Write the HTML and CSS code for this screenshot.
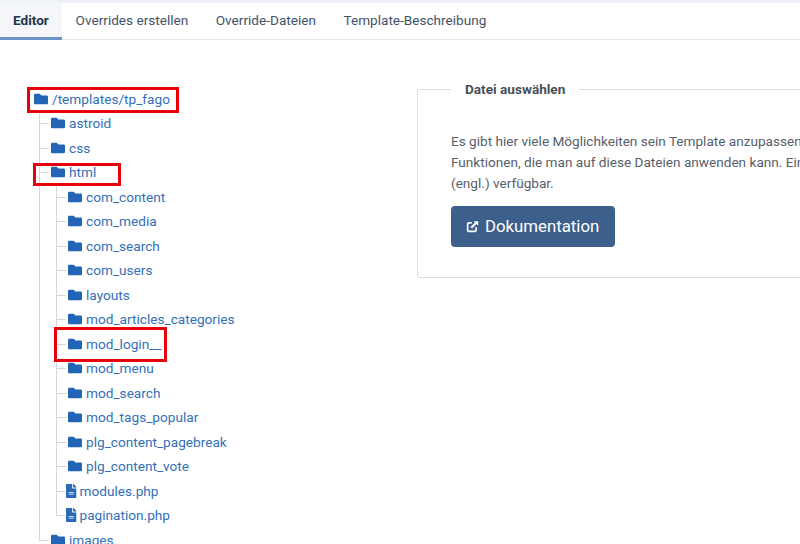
FILE: index.html
```html
<!DOCTYPE html>
<html lang="de">
<head>
<meta charset="utf-8">
<title>Template Editor</title>
<link rel="stylesheet" href="styles.css">
</head>
<body>
<svg class="defs" width="0" height="0" aria-hidden="true">
  <symbol id="folder" viewBox="0 0 512 512"><path d="M464 128H272l-64-64H48C21.5 64 0 85.5 0 112v288c0 26.5 21.5 48 48 48h416c26.5 0 48-21.5 48-48V176c0-26.500-21.500-48-48-48z"/></symbol>
  <symbol id="file" viewBox="0 0 384 512"><path d="M224 136V0H24C10.700 0 0 10.700 0 24v464c0 13.300 10.700 24 24 24h336c13.300 0 24-10.700 24-24V160H248c-13.200 0-24-10.800-24-24zm64 236c0 6.600-5.400 12-12 12H108c-6.600 0-12-5.400-12-12v-8c0-6.600 5.400-12 12-12h168c6.600 0 12 5.400 12 12v8zm0-64c0 6.600-5.400 12-12 12H108c-6.600 0-12-5.400-12-12v-8c0-6.600 5.400-12 12-12h168c6.600 0 12 5.400 12 12v8zm96-186v6H256V0h6c6.400 0 12.500 2.500 17 7l98 98c4.500 4.500 7 10.600 7 17z"/></symbol>
</svg>
<nav class="tabs">
  <a class="tab active">Editor</a>
  <a class="tab">Overrides erstellen</a>
  <a class="tab">Override-Dateien</a>
  <a class="tab">Template-Beschreibung</a>
</nav>
<main class="content">
  <section class="tree-col">
    <div class="node root"><svg class="ic-folder"><use href="#folder"/></svg><a>/templates/tp_fago</a></div>
    <ul class="tree">
      <li><div class="node"><svg class="ic-folder"><use href="#folder"/></svg><a>astroid</a></div></li>
      <li><div class="node"><svg class="ic-folder"><use href="#folder"/></svg><a>css</a></div></li>
      <li><div class="node"><svg class="ic-folder"><use href="#folder"/></svg><a>html</a></div>
        <ul class="tree">
          <li><div class="node"><svg class="ic-folder"><use href="#folder"/></svg><a>com_content</a></div></li>
          <li><div class="node"><svg class="ic-folder"><use href="#folder"/></svg><a>com_media</a></div></li>
          <li><div class="node"><svg class="ic-folder"><use href="#folder"/></svg><a>com_search</a></div></li>
          <li><div class="node"><svg class="ic-folder"><use href="#folder"/></svg><a>com_users</a></div></li>
          <li><div class="node"><svg class="ic-folder"><use href="#folder"/></svg><a>layouts</a></div></li>
          <li><div class="node"><svg class="ic-folder"><use href="#folder"/></svg><a>mod_articles_categories</a></div></li>
          <li><div class="node"><svg class="ic-folder"><use href="#folder"/></svg><a>mod_login__</a></div></li>
          <li><div class="node"><svg class="ic-folder"><use href="#folder"/></svg><a>mod_menu</a></div></li>
          <li><div class="node"><svg class="ic-folder"><use href="#folder"/></svg><a>mod_search</a></div></li>
          <li><div class="node"><svg class="ic-folder"><use href="#folder"/></svg><a>mod_tags_popular</a></div></li>
          <li><div class="node"><svg class="ic-folder"><use href="#folder"/></svg><a>plg_content_pagebreak</a></div></li>
          <li><div class="node"><svg class="ic-folder"><use href="#folder"/></svg><a>plg_content_vote</a></div></li>
          <li class="file"><div class="node"><svg class="ic-file"><use href="#file"/></svg><a>modules.php</a></div></li>
          <li class="file"><div class="node"><svg class="ic-file"><use href="#file"/></svg><a>pagination.php</a></div></li>
        </ul>
      </li>
      <li><div class="node"><svg class="ic-folder"><use href="#folder"/></svg><a>images</a></div></li>
    </ul>
  </section>
  <section class="info-col">
    <fieldset class="panel">
      <legend class="panel-title">Datei auswählen</legend>
      <p class="panel-text">Es gibt hier viele Möglichkeiten sein Template anzupassen. Auf der linken Seite befindet sich die Baumansicht.<br>Funktionen, die man auf diese Dateien anwenden kann. Eine Dokumentation ist auf der Joomla-Webseite<br>(engl.) verfügbar.</p>
      <a class="btn">
        <svg class="btn-icon" viewBox="0 0 16 16"><path d="M7 3.500H3.500A1.500 1.500 0 0 0 2 5v7.500A1.500 1.500 0 0 0 3.500 14H11a1.500 1.500 0 0 0 1.500-1.500V9" fill="none" stroke="currentColor" stroke-width="2"/><path d="M9.500 1.500H15V7l-2-2-5.500 5.500-2-2L11 3z" fill="currentColor"/></svg>
        Dokumentation
      </a>
    </fieldset>
  </section>
</main>
<div class="mark mark-root"></div>
<div class="mark mark-html"></div>
<div class="mark mark-login"></div>
</body>
</html>
```
FILE: styles.css
```css
html, body {
  margin: 0;
  height: 100%;
  overflow: hidden;
  background: #fff;
}
body {
  position: relative;
  font-family: Roboto, "Liberation Sans", sans-serif;
  font-size: 13.600px;
  color: #495057;
  line-height: 24.500px;
}
.defs { position: absolute; }

.tabs {
  display: flex;
  margin-top: 3px;
  height: 36px;
  border-bottom: 1px solid #dfe3ec;
  box-shadow: 0 -3px 0 #eef1f6;
}
.tab {
  padding: 0 13.750px;
  line-height: 35px;
  color: #3f5368;
  white-space: nowrap;
}
.tab.active {
  font-weight: 700;
  color: #22364f;
  background: #f4f6f9;
  box-shadow: inset 0 -3px 0 #6b93c4;
  margin-bottom: -1px;
  height: 37px;
  padding: 0 13px;
}

.content {
  display: flex;
  align-items: flex-start;
}
.tree-col {
  flex: 0 0 417px;
  box-sizing: border-box;
  padding: 46.500px 0 0 34px;
}
.info-col {
  flex: 0 0 500px;
  padding-top: 39px;
}

.node {
  display: flex;
  align-items: center;
  height: 24.500px;
  font-size: 13.650px;
  white-space: nowrap;
}
.node a { color: #3470b9; }
.ic-folder {
  width: 14px;
  height: 14px;
  margin-right: 4px;
  fill: #2264b5;
  flex: none;
}
.ic-file {
  width: 10.500px;
  height: 14px;
  margin-right: 3px;
  fill: #2a69b8;
  flex: none;
}

.tree {
  list-style: none;
  margin: 0;
  padding: 0 0 0 17px;
}
.tree li { position: relative; }
.tree li.file { margin-left: -2px; }
.tree li::before {
  content: "";
  position: absolute;
  left: -12px;
  top: 0;
  bottom: 0;
  border-left: 1px solid #d4d7dc;
}
.tree li:last-child::before { bottom: auto; height: 12px; }
.tree li.file::before { left: -10px; }
.tree li::after {
  content: "";
  position: absolute;
  left: -12px;
  top: 12px;
  width: 10px;
  border-top: 1px solid #d4d7dc;
}
.tree li.file::after { left: -10px; width: 9px; }

.panel {
  margin: 0;
  padding: 32px 33px 30px;
  border: 1px solid #d6dde9;
  border-radius: 2px;
  min-width: 0;
}
.panel-title {
  padding: 0 14px;
  font-weight: 700;
  line-height: 20px;
  color: #495057;
}
.panel-text {
  margin: 0 0 12.600px;
  white-space: nowrap;
  line-height: 20.800px;
  color: #56606b;
}
.btn {
  display: inline-flex;
  align-items: center;
  gap: 6px;
  height: 41px;
  padding: 0 15.500px 0 15px;
  border-radius: 4px;
  background: #3c5f8c;
  color: #fff;
  font-size: 16.800px;
}
.btn-icon { width: 13px; height: 13px; }

.mark {
  position: absolute;
  box-sizing: border-box;
  border: 3px solid #e8000b;
}
.mark-root { left: 27px; top: 87px; width: 152px; height: 26px; }
.mark-html { left: 33px; top: 163px; width: 88px; height: 23px; }
.mark-login { left: 54px; top: 327px; width: 113px; height: 35px; }
```
